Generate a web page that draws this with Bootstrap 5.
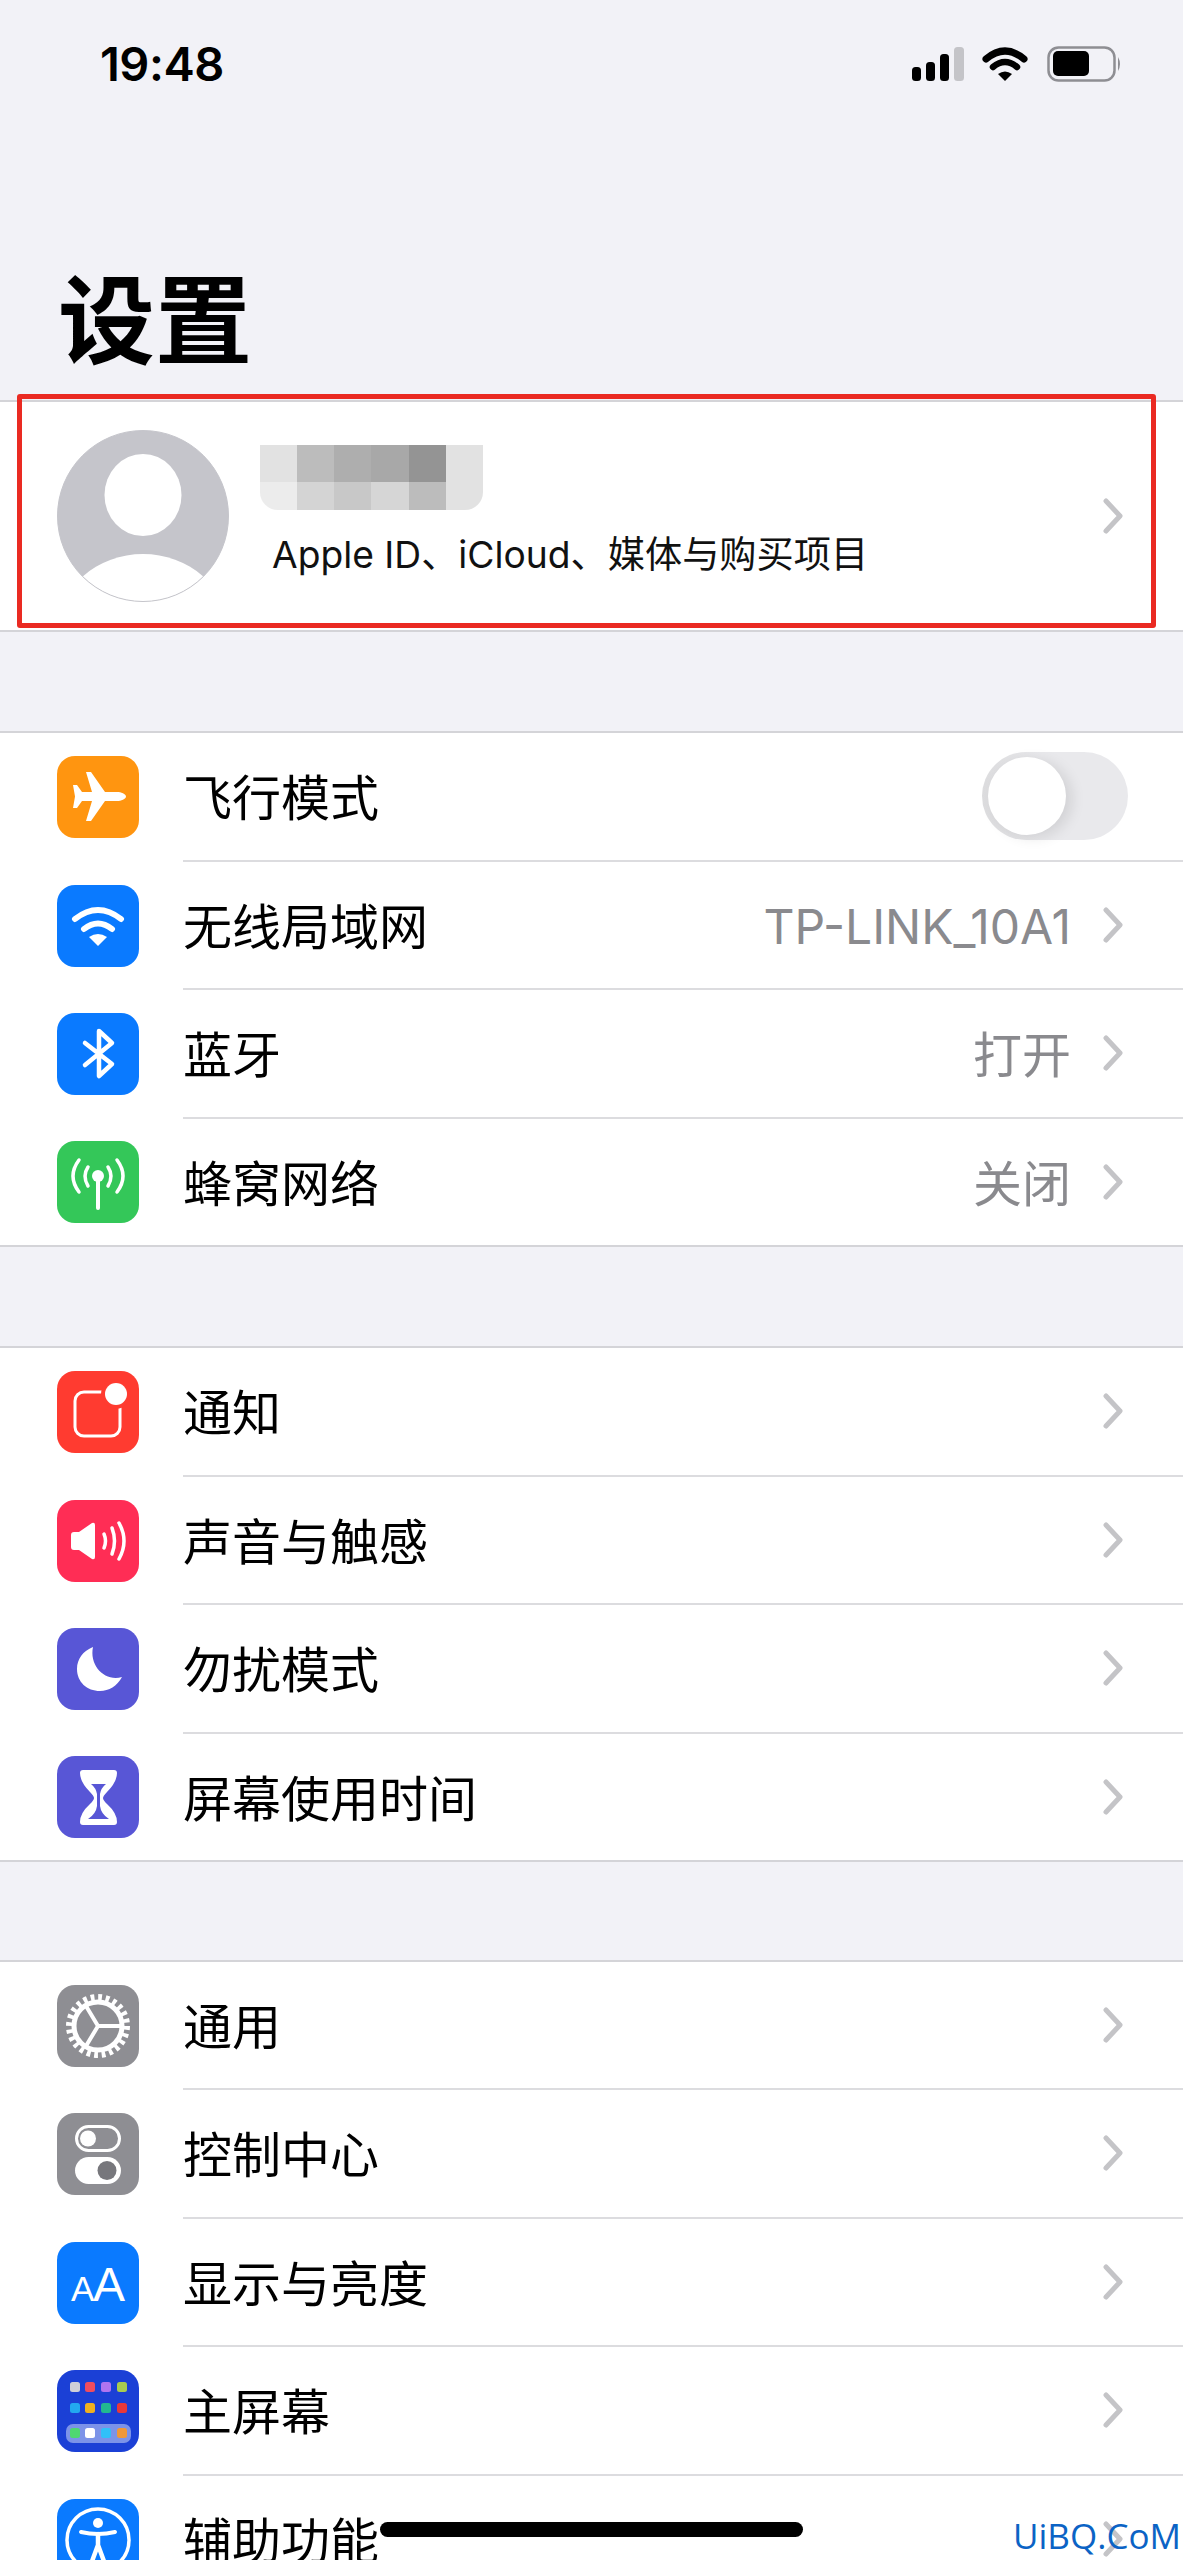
<!DOCTYPE html>
<html lang="zh">
<head>
  <meta charset="UTF-8">
  <title>设置</title>
  <link href="https://cdn.jsdelivr.net/npm/bootstrap@5.3.3/dist/css/bootstrap.min.css" rel="stylesheet">
  <style>
    body { background: #f2f2f7; color: #000; font-family: "Inter", "Noto Sans CJK SC", sans-serif; }
    .phone { height: 2560px; overflow: hidden; }

    .status-row { height: 128px; padding: 0 61px 0 100px; }
    .clock { font-size: 47px; font-weight: 600; letter-spacing: -.5px; }
    .page-title { height: 272px; padding: 143px 0 0 58px; font-size: 97px; line-height: 100px; font-weight: 700; margin: 0; }

    .group { background: #fff; border-top: 2px solid #d4d4d8; border-bottom: 2px solid #d4d4d8; border-radius: 0; }
    .group + .group { margin-top: 99px; }
    .group + .group.group-end { margin-top: 97.5px; }
    .row-item { height: 128.5px; padding: 0; border: 0; background: transparent; color: #000; }
    .row-last { height: 126.5px; }
    .app-icon { width: 82px; height: 82px; margin: 0 44px 0 57px; flex: none; display: block; }
    .row-body { height: 100%; border-bottom: 2px solid #dcdcdf; font-size: 49px; padding: 5px 60px 0 0; }
    .row-last .row-body { border-bottom: 0; }
    .row-value { color: #8a8a8e; margin-right: 32px; }
    .row-value-latin { font-size: 48px; }
    .chev { width: 20px; height: 36px; flex: none; margin-top: -5px; }
    .switch-track { width: 146px; height: 88px; border-radius: 44px; background: linear-gradient(90deg, #dcdcde, #e9e9ec 40%); padding: 5px 6px; margin: -5px -5px 0 0; }
    .switch-knob { width: 78px; height: 78px; border-radius: 50%; background: #fff; box-shadow: 6px 3px 14px rgba(0, 0, 0, .1); }

    .profile { height: 232px; }
    .profile-text { margin: -10px 0 0 31px; }
    .profile-chev { margin: 0 60px 0 0; }
    .blur-name { width: 223px; height: 65px; border-radius: 0 0 18px 18px;
      background:
        linear-gradient(90deg, #e2e2e2 16.6%, #bcbcbc 16.6% 33.3%, #aeaeae 33.3% 50%, #a8a8a8 50% 66.6%, #949494 66.6% 83.3%, #e2e2e2 83.3%) top / 100% 37px no-repeat,
        linear-gradient(90deg, #ececec 16.6%, #d4d4d4 16.6% 33.3%, #c8c8c8 33.3% 50%, #d6d6d6 50% 66.6%, #bcbcbc 66.6% 83.3%, #e2e2e2 83.3%) bottom / 100% 28px no-repeat;
    }
    .profile-sub { font-size: 37.2px; line-height: 44px; margin: 23px 0 0 12px; color: #111; }
    .avatar { width: 172px; height: 172px; flex: none; margin-left: 57px; display: block; }
    .red-frame { top: -8px; left: 17px; right: 27px; bottom: 2px; border: 5px solid #ea2a22; border-radius: 3px; }

    .home-bar { left: 380px; top: 2522px; width: 423px; height: 15px; border-radius: 8px; background: #000; }
    .watermark { left: 1013px; top: 2514px; font-family: "Open Sans", "Liberation Sans", sans-serif; font-size: 35px; line-height: 44px; color: #0b63c5; }
    .icon-label { font-family: "Liberation Sans", sans-serif; fill: #fff; }
  </style>
</head>
<body>
<div class="phone position-relative">

  <!-- 状态栏 -->
  <div class="status-row d-flex justify-content-between align-items-center">
    <span class="clock">19:48</span>
    <svg width="210" height="36" viewBox="0 0 210 36">
      <rect x="0" y="21" width="9" height="14" rx="3.5" fill="#000"/>
      <rect x="14" y="16" width="9" height="19" rx="3.5" fill="#000"/>
      <rect x="28" y="8" width="9" height="27" rx="3.5" fill="#000"/>
      <rect x="42" y="1" width="10" height="34" rx="3.5" fill="#c4c4c8"/>
      <path d="M74 13 Q93 -3 112 13" fill="none" stroke="#000" stroke-width="7" stroke-linecap="round"/>
      <path d="M81 21 Q93 11 105 21" fill="none" stroke="#000" stroke-width="6.5" stroke-linecap="round"/>
      <path d="M86 28 Q93 23 100 28 L93 35 Z" fill="#000"/>
      <rect x="136.5" y="1.5" width="66" height="33" rx="10" fill="none" stroke="#8e8e93" stroke-width="2.5"/>
      <rect x="141" y="5" width="36" height="25" rx="5" fill="#000"/>
      <path d="M206 11 Q210 18 206 25 Z" fill="#8e8e93"/>
    </svg>
  </div>

  <h1 class="page-title">设置</h1>

  <!-- Apple ID -->
  <div class="group profile d-flex align-items-center position-relative">
    <svg class="avatar" viewBox="0 0 172 172">
      <defs><clipPath id="avatarClip"><circle cx="86" cy="86" r="85.5"/></clipPath></defs>
      <circle cx="86" cy="86" r="85.5" fill="#c5c5cb"/>
      <ellipse cx="86" cy="65" rx="38.5" ry="41" fill="#fff"/>
      <ellipse cx="86" cy="198" rx="84" ry="74" fill="#fff" clip-path="url(#avatarClip)"/>
      <circle cx="86" cy="86" r="85.5" fill="none" stroke="#c5c5cb" stroke-width="1"/>
    </svg>
    <div class="profile-text flex-grow-1">
      <div class="blur-name"></div>
      <div class="profile-sub">Apple ID、iCloud、媒体与购买项目</div>
    </div>
    <svg class="chev profile-chev" viewBox="0 0 20 36"><path d="M3 3 L17 18 L3 33" fill="none" stroke="#c4c4c7" stroke-width="5" stroke-linecap="round" stroke-linejoin="round"/></svg>
    <div class="red-frame position-absolute"></div>
  </div>

  <!-- 网络 -->
  <ul class="group list-group">
    <li class="list-group-item row-item d-flex align-items-center">
      <svg class="app-icon" viewBox="0 0 82 82"><rect width="82" height="82" rx="18" fill="#ff9510"/><path d="M69 40.5 C69 43 64 45 60 45 H48 L34 65 H29 L35 45 H25 L20 52 H16 L18 40.5 L16 29 H20 L25 36 H35 L29 16 H34 L48 36 H60 C64 36 69 38 69 40.5 Z" fill="#fff"/></svg>
      <div class="row-body flex-grow-1 d-flex align-items-center justify-content-between">
        <span>飞行模式</span>
        <div class="switch-track"><div class="switch-knob"></div></div>
      </div>
    </li>
    <li class="list-group-item row-item d-flex align-items-center">
      <svg class="app-icon" viewBox="0 0 82 82"><rect width="82" height="82" rx="18" fill="#0a7aff"/><path d="M18 34 Q41 16 64 34" fill="none" stroke="#fff" stroke-width="6" stroke-linecap="round"/><path d="M27 44 Q41 33 55 44" fill="none" stroke="#fff" stroke-width="6" stroke-linecap="round"/><path d="M32 52 Q41 46 50 52 L41 61 Z" fill="#fff"/></svg>
      <div class="row-body flex-grow-1 d-flex align-items-center">
        <span class="flex-grow-1">无线局域网</span>
        <span class="row-value row-value-latin">TP-LINK_10A1</span>
        <svg class="chev" viewBox="0 0 20 36"><path d="M3 3 L17 18 L3 33" fill="none" stroke="#c4c4c7" stroke-width="5" stroke-linecap="round" stroke-linejoin="round"/></svg>
      </div>
    </li>
    <li class="list-group-item row-item d-flex align-items-center">
      <svg class="app-icon" viewBox="0 0 82 82"><rect width="82" height="82" rx="18" fill="#0a7aff"/><path d="M28 30 L55 51 L42 63 V18 L55 30 L28 52" fill="none" stroke="#fff" stroke-width="4.5" stroke-linecap="round" stroke-linejoin="round"/></svg>
      <div class="row-body flex-grow-1 d-flex align-items-center">
        <span class="flex-grow-1">蓝牙</span>
        <span class="row-value">打开</span>
        <svg class="chev" viewBox="0 0 20 36"><path d="M3 3 L17 18 L3 33" fill="none" stroke="#c4c4c7" stroke-width="5" stroke-linecap="round" stroke-linejoin="round"/></svg>
      </div>
    </li>
    <li class="list-group-item row-item row-last d-flex align-items-center">
      <svg class="app-icon" viewBox="0 0 82 82"><rect width="82" height="82" rx="18" fill="#34c759"/><circle cx="41" cy="35" r="6" fill="#fff"/><path d="M41 38 V67" stroke="#fff" stroke-width="4" stroke-linecap="round"/><g fill="none" stroke="#fff" stroke-width="3.5" stroke-linecap="round"><path d="M31 26 Q25 35 31 45"/><path d="M51 26 Q57 35 51 45"/><path d="M22 19 Q10 35 22 51"/><path d="M60 19 Q72 35 60 51"/></g></svg>
      <div class="row-body flex-grow-1 d-flex align-items-center">
        <span class="flex-grow-1">蜂窝网络</span>
        <span class="row-value">关闭</span>
        <svg class="chev" viewBox="0 0 20 36"><path d="M3 3 L17 18 L3 33" fill="none" stroke="#c4c4c7" stroke-width="5" stroke-linecap="round" stroke-linejoin="round"/></svg>
      </div>
    </li>
  </ul>

  <!-- 通知 -->
  <ul class="group list-group">
    <li class="list-group-item row-item d-flex align-items-center">
      <svg class="app-icon" viewBox="0 0 82 82"><rect width="82" height="82" rx="18" fill="#ff3b30"/><rect x="18" y="21" width="45" height="44" rx="9" fill="none" stroke="#fff" stroke-width="3"/><circle cx="59" cy="23" r="15" fill="#ff3b30"/><circle cx="59" cy="23" r="11" fill="#fff"/></svg>
      <div class="row-body flex-grow-1 d-flex align-items-center">
        <span class="flex-grow-1">通知</span>
        <svg class="chev" viewBox="0 0 20 36"><path d="M3 3 L17 18 L3 33" fill="none" stroke="#c4c4c7" stroke-width="5" stroke-linecap="round" stroke-linejoin="round"/></svg>
      </div>
    </li>
    <li class="list-group-item row-item d-flex align-items-center">
      <svg class="app-icon" viewBox="0 0 82 82"><rect width="82" height="82" rx="18" fill="#ff2d55"/><path d="M14 35 Q14 32 17 32 H22 L35 23 Q38 22 38 25 V57 Q38 60 35 59 L22 50 H17 Q14 50 14 47 Z" fill="#fff"/><g fill="none" stroke="#fff" stroke-width="3.5" stroke-linecap="round"><path d="M47 34 Q50 41 47 48"/><path d="M55 28 Q60 41 55 54"/><path d="M62 23 Q72 41 62 59"/></g></svg>
      <div class="row-body flex-grow-1 d-flex align-items-center">
        <span class="flex-grow-1">声音与触感</span>
        <svg class="chev" viewBox="0 0 20 36"><path d="M3 3 L17 18 L3 33" fill="none" stroke="#c4c4c7" stroke-width="5" stroke-linecap="round" stroke-linejoin="round"/></svg>
      </div>
    </li>
    <li class="list-group-item row-item d-flex align-items-center">
      <svg class="app-icon" viewBox="0 0 82 82"><rect width="82" height="82" rx="18" fill="#5856d6"/><path d="M36 19 C26 23 20 31 20 41 C20 54 30 63 43 63 C52 63 60 58 65 49 C48 54 32 38 36 19 Z" fill="#fff"/></svg>
      <div class="row-body flex-grow-1 d-flex align-items-center">
        <span class="flex-grow-1">勿扰模式</span>
        <svg class="chev" viewBox="0 0 20 36"><path d="M3 3 L17 18 L3 33" fill="none" stroke="#c4c4c7" stroke-width="5" stroke-linecap="round" stroke-linejoin="round"/></svg>
      </div>
    </li>
    <li class="list-group-item row-item row-last d-flex align-items-center">
      <svg class="app-icon" viewBox="0 0 82 82"><rect width="82" height="82" rx="18" fill="#5856d6"/><path d="M26 14 H57 Q60 14 60 17 Q60 26 50 36 Q46 40 46 42 Q46 44 50 48 Q60 57 60 66 Q60 69 57 69 H26 Q23 69 23 66 Q23 57 33 48 Q37 44 37 42 Q37 40 33 36 Q23 26 23 17 Q23 14 26 14 Z" fill="#fff"/><path d="M34 28 H49 Q44 32 43 38 V50 Q44 58 52 63 H31 Q39 58 40 50 V38 Q39 32 34 28 Z" fill="#5856d6"/></svg>
      <div class="row-body flex-grow-1 d-flex align-items-center">
        <span class="flex-grow-1">屏幕使用时间</span>
        <svg class="chev" viewBox="0 0 20 36"><path d="M3 3 L17 18 L3 33" fill="none" stroke="#c4c4c7" stroke-width="5" stroke-linecap="round" stroke-linejoin="round"/></svg>
      </div>
    </li>
  </ul>

  <!-- 通用 -->
  <ul class="group group-end list-group">
    <li class="list-group-item row-item d-flex align-items-center">
      <svg class="app-icon" viewBox="0 0 82 82"><rect width="82" height="82" rx="18" fill="#8e8e93"/><circle cx="41" cy="41" r="28.5" fill="none" stroke="#fff" stroke-width="7" stroke-dasharray="3.73 3.73"/><circle cx="41" cy="41" r="24" fill="none" stroke="#fff" stroke-width="5"/><path d="M41 41 L64 41 M41 41 L29 21 M41 41 L29 61" fill="none" stroke="#fff" stroke-width="4"/></svg>
      <div class="row-body flex-grow-1 d-flex align-items-center">
        <span class="flex-grow-1">通用</span>
        <svg class="chev" viewBox="0 0 20 36"><path d="M3 3 L17 18 L3 33" fill="none" stroke="#c4c4c7" stroke-width="5" stroke-linecap="round" stroke-linejoin="round"/></svg>
      </div>
    </li>
    <li class="list-group-item row-item d-flex align-items-center">
      <svg class="app-icon" viewBox="0 0 82 82"><rect width="82" height="82" rx="18" fill="#8e8e93"/><rect x="19.5" y="13.5" width="43" height="24" rx="12" fill="none" stroke="#fff" stroke-width="3"/><circle cx="31" cy="25.5" r="8" fill="#fff"/><rect x="18" y="44" width="46" height="27" rx="13.5" fill="#fff"/><circle cx="50" cy="57.5" r="9.5" fill="#77777c"/></svg>
      <div class="row-body flex-grow-1 d-flex align-items-center">
        <span class="flex-grow-1">控制中心</span>
        <svg class="chev" viewBox="0 0 20 36"><path d="M3 3 L17 18 L3 33" fill="none" stroke="#c4c4c7" stroke-width="5" stroke-linecap="round" stroke-linejoin="round"/></svg>
      </div>
    </li>
    <li class="list-group-item row-item d-flex align-items-center">
      <svg class="app-icon" viewBox="0 0 82 82"><rect width="82" height="82" rx="18" fill="#0a7aff"/><text class="icon-label" x="14" y="59" font-size="35">A</text><text class="icon-label" x="36" y="59" font-size="48">A</text></svg>
      <div class="row-body flex-grow-1 d-flex align-items-center">
        <span class="flex-grow-1">显示与亮度</span>
        <svg class="chev" viewBox="0 0 20 36"><path d="M3 3 L17 18 L3 33" fill="none" stroke="#c4c4c7" stroke-width="5" stroke-linecap="round" stroke-linejoin="round"/></svg>
      </div>
    </li>
    <li class="list-group-item row-item d-flex align-items-center">
      <svg class="app-icon" viewBox="0 0 82 82">
        <rect width="82" height="82" rx="18" fill="#1b40d6"/>
        <rect x="13" y="12" width="10" height="10" rx="2.5" fill="#cfcfd8"/><rect x="28" y="12" width="10" height="10" rx="2.5" fill="#f04d5e"/><rect x="44" y="12" width="10" height="10" rx="2.5" fill="#b074f0"/><rect x="60" y="12" width="10" height="10" rx="2.5" fill="#a8cc50"/>
        <rect x="13" y="33" width="10" height="10" rx="2.5" fill="#22a8f0"/><rect x="28" y="33" width="10" height="10" rx="2.5" fill="#f0b020"/><rect x="44" y="33" width="10" height="10" rx="2.5" fill="#22b890"/><rect x="60" y="33" width="10" height="10" rx="2.5" fill="#e83838"/>
        <rect x="9" y="54" width="65" height="19" rx="7" fill="#7c93e8"/>
        <rect x="13" y="58" width="10" height="10" rx="2.5" fill="#4fd870"/><rect x="28" y="58" width="10" height="10" rx="2.5" fill="#fff"/><rect x="44" y="58" width="10" height="10" rx="2.5" fill="#30c0f8"/><rect x="60" y="58" width="10" height="10" rx="2.5" fill="#f09838"/>
      </svg>
      <div class="row-body flex-grow-1 d-flex align-items-center">
        <span class="flex-grow-1">主屏幕</span>
        <svg class="chev" viewBox="0 0 20 36"><path d="M3 3 L17 18 L3 33" fill="none" stroke="#c4c4c7" stroke-width="5" stroke-linecap="round" stroke-linejoin="round"/></svg>
      </div>
    </li>
    <li class="list-group-item row-item d-flex align-items-center">
      <svg class="app-icon" viewBox="0 0 82 82"><rect width="82" height="82" rx="18" fill="#0a7aff"/><circle cx="41" cy="41" r="31" fill="none" stroke="#fff" stroke-width="3.5"/><circle cx="41" cy="24" r="5" fill="#fff"/><path d="M24 33 Q41 37 58 33" fill="none" stroke="#fff" stroke-width="4" stroke-linecap="round"/><path d="M41 35 V47 M41 46 L34 65 M41 46 L48 65" fill="none" stroke="#fff" stroke-width="4.5" stroke-linecap="round"/></svg>
      <div class="row-body flex-grow-1 d-flex align-items-center">
        <span class="flex-grow-1">辅助功能</span>
        <svg class="chev" viewBox="0 0 20 36"><path d="M3 3 L17 18 L3 33" fill="none" stroke="#c4c4c7" stroke-width="5" stroke-linecap="round" stroke-linejoin="round"/></svg>
      </div>
    </li>
  </ul>

  <div class="home-bar position-absolute"></div>
  <div class="watermark position-absolute">UiBQ.CoM</div>
</div>

<script src="https://cdn.jsdelivr.net/npm/bootstrap@5.3.3/dist/js/bootstrap.bundle.min.js"></script>
</body>
</html>
